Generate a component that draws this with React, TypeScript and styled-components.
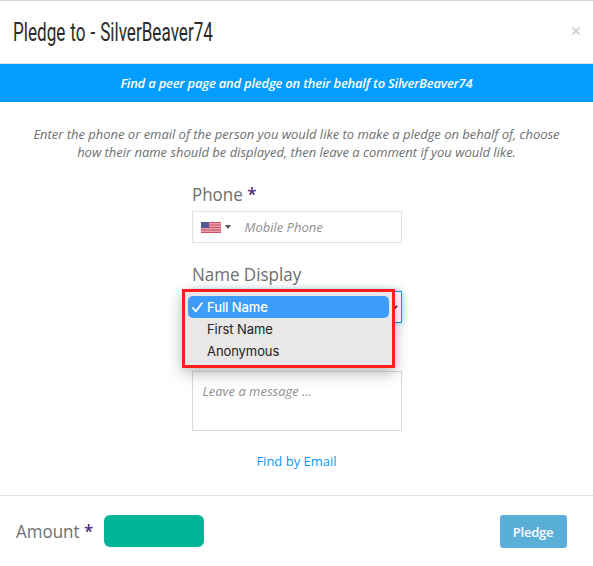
import React from "react";
import styled, { createGlobalStyle } from "styled-components";

const GlobalStyle = createGlobalStyle`
  *, *::before, *::after { box-sizing: border-box; }
  body { margin: 0; background: #fff; overflow: hidden; }
  button, input, textarea { font: inherit; }
`;

const Modal = styled.main`
  display: flex;
  flex-direction: column;
  height: 566px;
  border-top: 1px solid #d6d6d6;
  background: #fff;
  color: #6d6f6f;
  font-family: "Open Sans", sans-serif;
  font-size: 13px;
`;

const Header = styled.header`
  display: flex;
  align-items: center;
  justify-content: space-between;
  height: 63px;
  padding: 0 12px 0 13px;
  border-bottom: 1px solid #e2e2e2;
`;

const Title = styled.h1`
  margin: 1px 0 0;
  color: #2b2b2b;
  font-family: Roboto, sans-serif;
  font-size: 25px;
  font-weight: 400;
  line-height: 30px;
  white-space: nowrap;
  word-spacing: 1px;
  transform: scaleX(0.685);
  transform-origin: left;
`;

const Close = styled.button`
  display: flex;
  margin-top: -2px;
  padding: 0;
  border: 0;
  background: none;
`;

const Banner = styled.p`
  height: 38px;
  margin: 0;
  background: #039dfd;
  color: #fff;
  font-style: italic;
  font-weight: 600;
  font-size: 13px;
  line-height: 38px;
  letter-spacing: -0.22px;
  text-align: center;
`;

const Form = styled.section`
  display: flex;
  flex-direction: column;
  align-items: center;
  height: 394px;
  padding-top: 23px;
  border-bottom: 1px solid #e2e2e2;
`;

const Intro = styled.p`
  width: 540px;
  margin: 0;
  font-size: 13px;
  font-style: italic;
  line-height: 18px;
  letter-spacing: -0.02px;
  text-align: center;
`;

const Fields = styled.div`
  display: flex;
  flex-direction: column;
  width: 210px;
  margin-top: 22px;
`;

const Label = styled.label`
  height: 28px;
  font-size: 18px;
  line-height: 23px;
  white-space: nowrap;
  transform: scaleX(0.943);
  transform-origin: left;
`;

const Required = styled.span`
  color: #512b80;
  font-weight: 600;
`;

const PhoneInput = styled.div`
  display: flex;
  align-items: center;
  height: 32px;
  margin-bottom: 20px;
  padding-left: 8px;
  border: 1px solid #e0e0e0;
  svg { flex: none; }
`;

const Placeholder = styled.span`
  color: #8f8f8f;
  font-style: italic;
`;

const PhonePlaceholder = styled(Placeholder)`
  margin-left: 14px;
`;

const SelectBox = styled.div`
  position: relative;
  display: flex;
  align-items: center;
  justify-content: flex-end;
  height: 32px;
  padding-right: 3px;
  border: 1px solid #1596d6;
  box-shadow: 0 0 7px rgba(21, 150, 214, 0.45);
`;

const Menu = styled.ul`
  position: absolute;
  top: -3px;
  left: -11px;
  width: 213px;
  height: 79px;
  margin: 0;
  padding: 4px 3px;
  border: 3px solid #ff1e1e;
  background: #e9e7e7;
  box-shadow: 0 5px 14px rgba(0, 0, 0, 0.28);
  list-style: none;
`;

const Option = styled.li<{ $selected?: boolean }>`
  display: flex;
  align-items: center;
  height: 22px;
  border-radius: 5px;
  background: ${({ $selected }) => ($selected ? "#3e9dfa" : "transparent")};
  color: ${({ $selected }) => ($selected ? "#fff" : "#222")};
  font-family: Inter, sans-serif;
  font-size: 13px;
  font-weight: ${({ $selected }) => ($selected ? 500 : 400)};
  letter-spacing: -0.08px;
`;

const CheckSlot = styled.span`
  display: flex;
  width: 19.5px;
  padding-left: 4px;
`;

const Message = styled.div`
  height: 60px;
  margin-top: 48px;
  padding: 10px;
  border: 1px solid #d9d9d9;
  line-height: 18px;
`;

const FindLink = styled.a`
  margin-top: 21px;
  color: #0999f5;
  font-size: 13px;
  line-height: 18px;
`;

const Footer = styled.footer`
  display: flex;
  align-items: center;
  height: 70px;
  padding: 1px 26px 0 16px;
`;

const AmountLabel = styled(Label)`
  width: 88px;
  height: 24px;
`;

const Amount = styled.div`
  width: 100px;
  height: 32px;
  margin-bottom: 1px;
  border-radius: 6px;
  background: #00b497;
`;

const PledgeButton = styled.button`
  width: 67px;
  height: 33px;
  margin-left: auto;
  padding: 0 1px 0 0;
  border: 0;
  border-radius: 3px;
  background: #5aafd9;
  color: #fff;
  font-size: 13px;
  font-weight: 600;
  letter-spacing: -0.25px;
`;

const stripes = [0, 1, 2, 3, 4, 5, 6];

function Flag() {
  return (
    <svg width="20" height="11" viewBox="0 0 20 11">
      <rect width="20" height="11" fill="#efc8cf" />
      {stripes.map((i) => (
        <rect key={i} y={i * 1.69} width="20" height="0.86" fill="#cd3d56" />
      ))}
      <rect width="8" height="6" fill="#55588e" />
    </svg>
  );
}

function Caret() {
  return (
    <svg width="6" height="4" viewBox="0 0 6 4">
      <path d="M0 0H6L3 4Z" fill="#555" />
    </svg>
  );
}

const CaretSlot = styled.span`
  display: flex;
  margin-left: 4px;
`;

export default function App() {
  return (
    <>
      <GlobalStyle />
      <Modal>
        <Header>
          <Title>Pledge to - SilverBeaver74</Title>
          <Close aria-label="Close">
            <svg width="10" height="10" viewBox="0 0 10 10">
              <path d="M1.5 1.5L8.5 8.5M8.5 1.5L1.5 8.5" stroke="#c8c8c8" strokeWidth="1.6" />
            </svg>
          </Close>
        </Header>
        <Banner>Find a peer page and pledge on their behalf to SilverBeaver74</Banner>
        <Form>
          <Intro>
            Enter the phone or email of the person you would like to make a pledge on behalf of, choose
            <br />
            how their name should be displayed, then leave a comment if you would like.
          </Intro>
          <Fields>
            <Label>
              Phone <Required>*</Required>
            </Label>
            <PhoneInput>
              <Flag />
              <CaretSlot>
                <Caret />
              </CaretSlot>
              <PhonePlaceholder>Mobile Phone</PhonePlaceholder>
            </PhoneInput>
            <Label>Name Display</Label>
            <SelectBox>
              <svg width="7" height="5" viewBox="0 0 7 5">
                <path d="M1 0.8L3.5 3.5L6 0.8" fill="none" stroke="#222" strokeWidth="1.7" />
              </svg>
              <Menu>
                <Option $selected>
                  <CheckSlot>
                    <svg width="11" height="11" viewBox="0 0 11 11">
                      <path
                        d="M1 6L4 9.3L9.8 1.3"
                        fill="none"
                        stroke="#fff"
                        strokeWidth="1.8"
                        strokeLinecap="round"
                        strokeLinejoin="round"
                      />
                    </svg>
                  </CheckSlot>
                  Full Name
                </Option>
                <Option>
                  <CheckSlot />
                  First Name
                </Option>
                <Option>
                  <CheckSlot />
                  Anonymous
                </Option>
              </Menu>
            </SelectBox>
            <Message>
              <Placeholder>Leave a message ...</Placeholder>
            </Message>
          </Fields>
          <FindLink>Find by Email</FindLink>
        </Form>
        <Footer>
          <AmountLabel>
            Amount <Required>*</Required>
          </AmountLabel>
          <Amount />
          <PledgeButton>Pledge</PledgeButton>
        </Footer>
      </Modal>
    </>
  );
}
